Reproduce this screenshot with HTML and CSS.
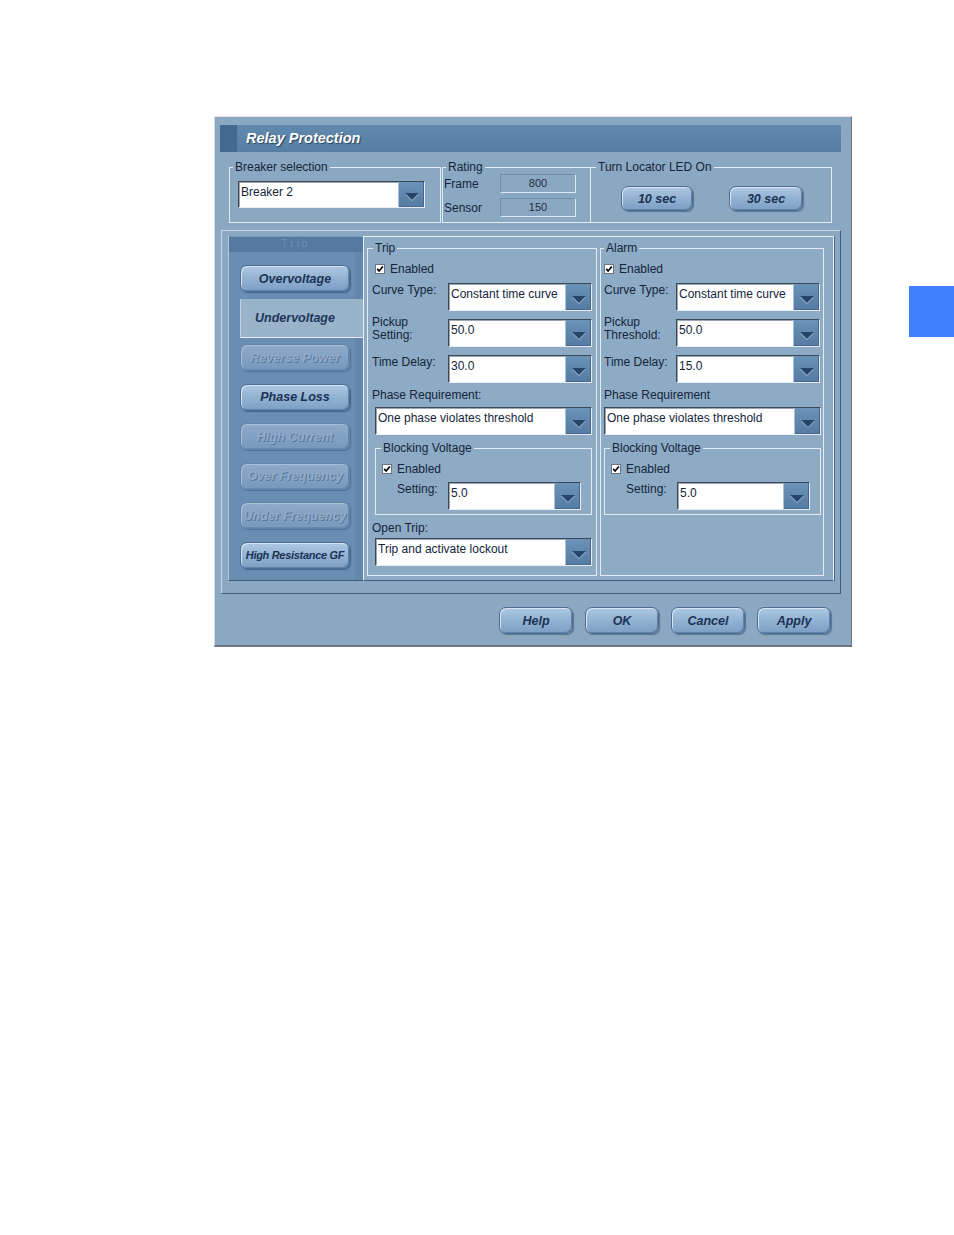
FILE: index.html
```html
<!DOCTYPE html>
<html lang="en">
<head>
    <meta charset="UTF-8">
    <meta name="viewport" content="width=device-width, initial-scale=1.0">
    <title>Relay Protection</title>
    <link rel="stylesheet" href="styles.css">
</head>
<body>
    <div class="page">
        <div class="dialog">
            <div class="titlebar">
                <span class="title-mark"></span>
                <span class="title">Relay Protection</span>
            </div>

            <div class="top-row">
                <fieldset class="group breaker">
                    <legend>Breaker selection</legend>
                    <div class="combo combo-breaker">
                        <span class="combo-value">Breaker 2</span>
                        <span class="combo-arrow"></span>
                    </div>
                </fieldset>
                <fieldset class="group rating">
                    <legend>Rating</legend>
                    <div class="rating-row">
                        <span class="rating-label">Frame</span>
                        <span class="readout">800</span>
                    </div>
                    <div class="rating-row">
                        <span class="rating-label">Sensor</span>
                        <span class="readout">150</span>
                    </div>
                </fieldset>
                <fieldset class="group locator">
                    <legend>Turn Locator LED On</legend>
                    <div class="locator-buttons">
                        <button class="btn btn-small btn-10">10 sec</button>
                        <button class="btn btn-small btn-30">30 sec</button>
                    </div>
                </fieldset>
            </div>

            <div class="main">
                <div class="nav">
                    <div class="nav-header">Trip</div>
                    <div class="nav-list">
                        <div class="nav-item"><button class="btn">Overvoltage</button></div>
                        <div class="nav-item nav-item-active"><span class="nav-tab">Undervoltage</span></div>
                        <div class="nav-item"><button class="btn btn-disabled">Reverse Power</button></div>
                        <div class="nav-item"><button class="btn">Phase Loss</button></div>
                        <div class="nav-item"><button class="btn btn-disabled">High Current</button></div>
                        <div class="nav-item"><button class="btn btn-disabled">Over Frequency</button></div>
                        <div class="nav-item"><button class="btn btn-disabled">Under Frequency</button></div>
                        <div class="nav-item"><button class="btn btn-narrow">High Resistance GF</button></div>
                    </div>
                </div>

                <div class="content">
                    <fieldset class="group trip">
                        <legend>Trip</legend>
                        <div class="group-body">
                            <div class="check-row">
                                <svg class="checkbox" width="10" height="10" viewBox="0 0 10 10"><rect x="0.5" y="0.5" width="9" height="9" fill="#fff" stroke="#6c7682"/><path d="M2.2 4.9 L4.1 7 L7.9 2.5" fill="none" stroke="#000" stroke-width="1.7"/></svg>
                                <span>Enabled</span>
                            </div>
                            <div class="field field-first">
                                <span class="field-label">Curve Type:</span>
                                <div class="combo"><span class="combo-value">Constant time curve</span><span class="combo-arrow"></span></div>
                            </div>
                            <div class="field">
                                <span class="field-label field-label-two">Pickup<br>Setting:</span>
                                <div class="combo"><span class="combo-value">50.0</span><span class="combo-arrow"></span></div>
                            </div>
                            <div class="field">
                                <span class="field-label">Time Delay:</span>
                                <div class="combo"><span class="combo-value">30.0</span><span class="combo-arrow"></span></div>
                            </div>
                            <div class="block-label">Phase Requirement:</div>
                            <div class="combo combo-wide"><span class="combo-value">One phase violates threshold</span><span class="combo-arrow"></span></div>

                            <fieldset class="group blocking">
                                <legend>Blocking Voltage</legend>
                                <div class="check-row">
                                    <svg class="checkbox" width="10" height="10" viewBox="0 0 10 10"><rect x="0.5" y="0.5" width="9" height="9" fill="#fff" stroke="#6c7682"/><path d="M2.2 4.9 L4.1 7 L7.9 2.5" fill="none" stroke="#000" stroke-width="1.7"/></svg>
                                    <span>Enabled</span>
                                </div>
                                <div class="field field-setting">
                                    <span class="setting-label">Setting:</span>
                                    <div class="combo combo-setting"><span class="combo-value">5.0</span><span class="combo-arrow"></span></div>
                                </div>
                            </fieldset>

                            <div class="block-label open-trip">Open Trip:</div>
                            <div class="combo combo-wide combo-open"><span class="combo-value">Trip and activate lockout</span><span class="combo-arrow"></span></div>
                        </div>
                    </fieldset>

                    <fieldset class="group alarm">
                        <legend>Alarm</legend>
                        <div class="group-body">
                            <div class="check-row">
                                <svg class="checkbox" width="10" height="10" viewBox="0 0 10 10"><rect x="0.5" y="0.5" width="9" height="9" fill="#fff" stroke="#6c7682"/><path d="M2.2 4.9 L4.1 7 L7.9 2.5" fill="none" stroke="#000" stroke-width="1.7"/></svg>
                                <span>Enabled</span>
                            </div>
                            <div class="field field-first">
                                <span class="field-label">Curve Type:</span>
                                <div class="combo"><span class="combo-value">Constant time curve</span><span class="combo-arrow"></span></div>
                            </div>
                            <div class="field">
                                <span class="field-label field-label-two">Pickup<br>Threshold:</span>
                                <div class="combo"><span class="combo-value">50.0</span><span class="combo-arrow"></span></div>
                            </div>
                            <div class="field">
                                <span class="field-label">Time Delay:</span>
                                <div class="combo"><span class="combo-value">15.0</span><span class="combo-arrow"></span></div>
                            </div>
                            <div class="block-label">Phase Requirement</div>
                            <div class="combo combo-wide"><span class="combo-value">One phase violates threshold</span><span class="combo-arrow"></span></div>

                            <fieldset class="group blocking">
                                <legend>Blocking Voltage</legend>
                                <div class="check-row">
                                    <svg class="checkbox" width="10" height="10" viewBox="0 0 10 10"><rect x="0.5" y="0.5" width="9" height="9" fill="#fff" stroke="#6c7682"/><path d="M2.2 4.9 L4.1 7 L7.9 2.5" fill="none" stroke="#000" stroke-width="1.7"/></svg>
                                    <span>Enabled</span>
                                </div>
                                <div class="field field-setting">
                                    <span class="setting-label">Setting:</span>
                                    <div class="combo combo-setting"><span class="combo-value">5.0</span><span class="combo-arrow"></span></div>
                                </div>
                            </fieldset>
                        </div>
                    </fieldset>
                </div>
            </div>

            <div class="footer">
                <button class="btn btn-footer">Help</button>
                <button class="btn btn-footer">OK</button>
                <button class="btn btn-footer">Cancel</button>
                <button class="btn btn-footer">Apply</button>
            </div>
        </div>

        <div class="edge-tab"></div>
    </div>
</body>
</html>
```

FILE: styles.css
```css
body {
    margin: 0;
    font-family: "Liberation Sans", Arial, sans-serif;
    font-size: 12px;
    color: #14253b;
    background-color: #fff;
}
.page {
    display: flex;
    align-items: flex-start;
    padding-top: 116px;
    padding-left: 214px;
}
.dialog {
    width: 638px;
    box-sizing: border-box;
    background-color: #8ba8c2;
    border: 1px solid #6c7783;
    border-top-color: #f0e2e2;
    border-left-color: #d5dde6;
    border-bottom-width: 2px;
    padding: 8px 10px 11px 5px;
}

/* Title */
.titlebar {
    display: flex;
    height: 27px;
    background: linear-gradient(#6189ad, #577fa4);
}
.title-mark {
    width: 17px;
    background-color: #44698e;
}
.title {
    padding-left: 9px;
    font-size: 14.5px;
    font-weight: bold;
    font-style: italic;
    line-height: 27px;
    color: #fff;
    text-shadow: 1px 1px 1px #24425f;
}

/* Group boxes */
.group {
    margin: 0;
    padding: 0;
    border: 1px solid #e4ecf3;
    min-width: 0;
}
.group legend {
    padding: 0 2px;
    margin-left: 4px;
    line-height: 14px;
}
.top-row {
    display: flex;
    margin-top: 8px;
    margin-left: 9px;
}
.breaker {
    width: 212px;
    box-sizing: border-box;
    padding: 7px 0 13px 8px;
}
.breaker legend {
    margin-left: -5px;
}
.rating {
    width: 148px;
    box-sizing: border-box;
    margin-left: 1px;
    border-right: none;
}
.rating legend {
    margin-left: 3px;
}
.rating-row {
    display: flex;
    align-items: center;
    height: 19px;
    margin-bottom: 5px;
}
.rating-label {
    width: 56px;
    padding-left: 1px;
}
.readout {
    width: 76px;
    height: 19px;
    box-sizing: border-box;
    border: 1px solid;
    border-color: #6f8eac #dde7ef #dde7ef #6f8eac;
    text-align: center;
    font-size: 11px;
    line-height: 17px;
    color: #1d2e44;
}
.locator {
    width: 242px;
    box-sizing: border-box;
    padding: 12px 0 10px 30px;
}
.locator legend {
    margin-left: -25px;
}
.locator-buttons {
    display: flex;
    gap: 36px;
}

/* Combo boxes */
.combo {
    display: flex;
    width: 144px;
    height: 28px;
    box-sizing: border-box;
    background-color: #fff;
    border: 1px solid;
    border-color: #3b4856 #e6edf3 #e6edf3 #3b4856;
    box-shadow: inset 1px 1px 0 #9ba6b2;
}
.combo-breaker {
    width: 187px;
    height: 27px;
}
.combo-value {
    flex: 1;
    padding: 3px 0 0 2px;
    line-height: 14px;
    white-space: nowrap;
    overflow: hidden;
}
.combo-arrow {
    width: 25px;
    display: flex;
    align-items: center;
    justify-content: center;
    background: linear-gradient(#6b92b8, #557ba2);
    border-left: 1px solid #a9bfd4;
    box-shadow: inset -1px -1px 0 #44688d;
}
.combo-arrow::after {
    content: "";
    margin-top: 4px;
    border-left: 7px solid transparent;
    border-right: 7px solid transparent;
    border-top: 7px solid #26456a;
    filter: drop-shadow(0 1px 0 #a7bfd6);
}

/* Buttons */
.btn {
    width: 110px;
    height: 27px;
    box-sizing: border-box;
    padding: 0;
    border: 1px solid #4b6f94;
    border-radius: 7px;
    background: linear-gradient(#adc8e2, #8fb0d1 55%, #7d9fc4);
    box-shadow: inset 1px 1px 0 #d7e5f2, inset -1px -1px 0 #5f83a8, 1px 1px 1px rgba(30, 50, 80, 0.45);
    font-family: "Liberation Sans", Arial, sans-serif;
    font-size: 12.5px;
    font-weight: bold;
    font-style: italic;
    color: #1b3354;
    white-space: nowrap;
}
.btn-small {
    height: 25px;
}
.btn-10 {
    width: 72px;
}
.btn-30 {
    width: 74px;
}
.btn-narrow {
    font-size: 11px;
    letter-spacing: -0.3px;
}
.btn-disabled {
    border-color: #6185a9;
    background: linear-gradient(#8dabca, #7899bc);
    box-shadow: inset 1px 1px 0 #a7bfd7, inset -1px -1px 0 #6688ad, 1px 1px 1px rgba(30, 50, 80, 0.3);
    color: #91abc7;
    text-shadow: 1px 1px 0 #55779c;
}
.btn-footer {
    width: 74px;
}

/* Main panel */
.main {
    display: flex;
    width: 620px;
    box-sizing: border-box;
    margin-top: 7px;
    margin-left: 1px;
    padding: 5px 6px 12px 6px;
    border: 1px solid;
    border-color: #c6d4e1 #3f5d7b #3f5d7b #c6d4e1;
}
.nav {
    width: 135px;
    height: 345px;
    box-sizing: border-box;
    background-color: #698eb2;
    border-left: 1px solid #b8c9da;
    border-bottom: 1px solid #3f5f80;
    box-shadow: inset -8px 0 0 #6386aa;
}
.nav-header {
    height: 16px;
    box-sizing: border-box;
    background-color: #5579a0;
    border-top: 1px solid #7797b7;
    text-align: center;
    font-size: 10px;
    line-height: 14px;
    letter-spacing: 3px;
    color: #6c8fb3;
}
.nav-list {
    padding-top: 7px;
}
.nav-item {
    height: 39.5px;
    display: flex;
    align-items: center;
    padding-left: 11px;
}
.nav-tab {
    flex: 1;
    align-self: stretch;
    box-sizing: border-box;
    padding-right: 14px;
    display: flex;
    align-items: center;
    justify-content: center;
    background-color: #99b3cb;
    border-left: 1px solid #c0d0df;
    border-bottom: 1px solid #e6eef5;
    font-size: 12.5px;
    font-weight: bold;
    font-style: italic;
    color: #1e3658;
}

/* Content */
.content {
    flex: 1;
    display: flex;
    gap: 3px;
    padding: 4px 8px 4px 3px;
    background-color: #8dabc5;
    border: 1px solid;
    border-color: #e8eff5 #e8eff5 #3f5f80 #e8eff5;
    box-shadow: 1px 0 0 #4a6a8a;
}
.trip {
    width: 230px;
    box-sizing: border-box;
}
.alarm {
    width: 224px;
    box-sizing: border-box;
}
.trip legend {
    margin-left: 5px;
}
.alarm legend {
    margin-left: 3px;
}
.group-body {
    padding: 0 3px 6px 4px;
}
.alarm .group-body {
    padding: 0 2px 6px 3px;
}
.check-row {
    display: flex;
    align-items: center;
    gap: 5px;
    height: 14px;
    margin-top: 7px;
    padding-left: 3px;
}
.alarm .check-row {
    padding-left: 0;
}
.field {
    display: flex;
    align-items: flex-start;
    margin-top: 8px;
}
.field-first {
    margin-top: 7px;
}
.field-label {
    width: 76px;
    flex-shrink: 0;
    line-height: 14px;
    padding-top: 0;
}
.alarm .field-label {
    width: 72px;
}
.field-label-two {
    line-height: 13px;
    margin-top: -3px;
}
.block-label {
    margin-top: 5px;
    line-height: 14px;
}
.combo-wide {
    width: auto;
    margin: 5px 1px 0 3px;
}
.alarm .combo-wide {
    margin: 5px 0 0 0;
}
.blocking {
    margin: 6px 1px 0 3px;
    padding: 0 0 4px 0;
}
.alarm .blocking {
    margin: 6px 0 0 0;
}
.blocking legend {
    margin-left: 5px;
}
.blocking .check-row {
    padding-left: 6px;
}
.field-setting {
    margin-top: 6px;
    padding-left: 21px;
}
.setting-label {
    width: 51px;
    flex-shrink: 0;
    line-height: 14px;
}
.combo-setting {
    width: 133px;
}
.open-trip {
    margin-top: 6px;
}
.combo-open {
    margin-top: 3px;
}

/* Footer */
.footer {
    display: flex;
    justify-content: flex-end;
    gap: 12px;
    padding: 13px 10px 0 0;
}

.edge-tab {
    margin-left: auto;
    margin-top: 170px;
    width: 45px;
    height: 51px;
    background-color: #4080ff;
}
```
